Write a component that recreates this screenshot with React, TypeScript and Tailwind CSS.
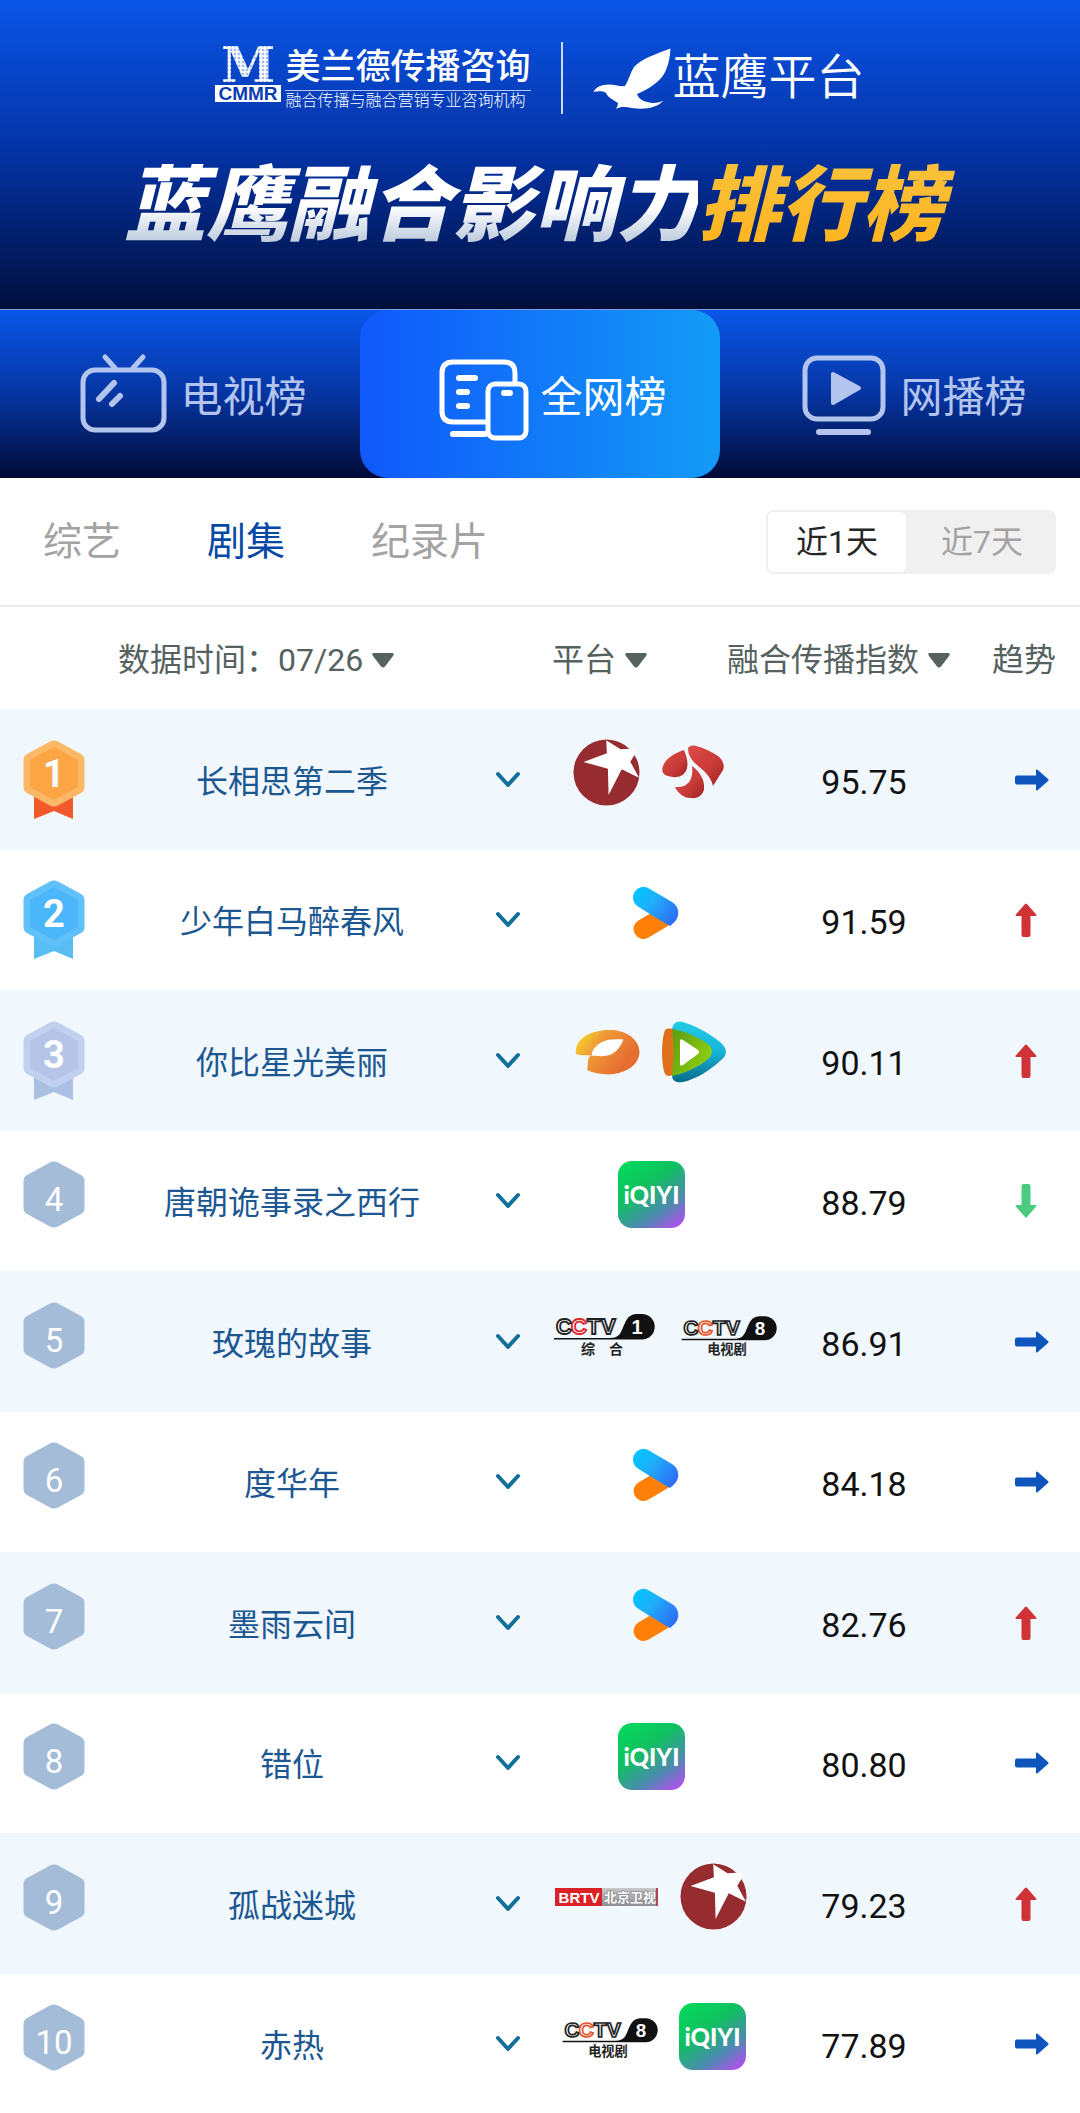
import React, { useState } from "react";

type Trend = "flat" | "up" | "down";
type Platform =
  | "dragon"
  | "jiangsu"
  | "youku"
  | "mango"
  | "tencent"
  | "iqiyi"
  | "cctv1"
  | "cctv8"
  | "brtv";

interface RankItem {
  rank: number;
  title: string;
  platforms: Platform[];
  score: string;
  trend: Trend;
}

const items: RankItem[] = [
  { rank: 1, title: "长相思第二季", platforms: ["dragon", "jiangsu"], score: "95.75", trend: "flat" },
  { rank: 2, title: "少年白马醉春风", platforms: ["youku"], score: "91.59", trend: "up" },
  { rank: 3, title: "你比星光美丽", platforms: ["mango", "tencent"], score: "90.11", trend: "up" },
  { rank: 4, title: "唐朝诡事录之西行", platforms: ["iqiyi"], score: "88.79", trend: "down" },
  { rank: 5, title: "玫瑰的故事", platforms: ["cctv1", "cctv8"], score: "86.91", trend: "flat" },
  { rank: 6, title: "度华年", platforms: ["youku"], score: "84.18", trend: "flat" },
  { rank: 7, title: "墨雨云间", platforms: ["youku"], score: "82.76", trend: "up" },
  { rank: 8, title: "错位", platforms: ["iqiyi"], score: "80.80", trend: "flat" },
  { rank: 9, title: "孤战迷城", platforms: ["brtv", "dragon"], score: "79.23", trend: "up" },
  { rank: 10, title: "赤热", platforms: ["cctv8", "iqiyi"], score: "77.89", trend: "flat" },
];

/* ---------- platform logos ---------- */

const DragonLogo = () => (
  <svg width="67" height="67" viewBox="0 0 67 67" role="img" aria-label="东方卫视">
    <circle cx="33.5" cy="33.5" r="33" fill="#962b30" />
    <path
      d="M33.2 1.3 47.6 10.3 60.5 9.5 63 13.5 57.3 22.7 66 38.7 48.7 30.3 35.6 56 34.9 29.7 10.5 23 33.9 14.3Z"
      fill="#fff"
    />
  </svg>
);

const JiangsuLogo = () => (
  <svg width="67" height="67" viewBox="0 0 67 67" role="img" aria-label="江苏卫视">
    <defs>
      <linearGradient id="petal" x1="0" y1="0" x2="1" y2="1">
        <stop offset="0" stopColor="#dd4b46" />
        <stop offset="0.6" stopColor="#c83a38" />
        <stop offset="1" stopColor="#98231f" />
      </linearGradient>
    </defs>
    <g fill="url(#petal)">
      <path d="M22 11C25 18 27 26 24 32C20 39 12 39 6 37C1 36-1 32 1 27C4 19 13 14 22 11Z" />
      <path d="M26 9C27 7 31 6 34 7C42 9 50 13 56 17C61 21 63 27 61 31L51 47C50 42 47 37 42 32C34 25 26 20 26 9Z" />
      <path d="M30 27C38 33 43 41 42 50C41 56 36 60 29 59C21 59 16 54 13 48C24 49 32 43 30 27Z" />
    </g>
  </svg>
);

const YoukuLogo = () => (
  <svg width="67" height="67" viewBox="0 0 67 67" role="img" aria-label="优酷">
    <defs>
      <linearGradient id="youkuBlue" x1="16" y1="10" x2="58" y2="42" gradientUnits="userSpaceOnUse">
        <stop offset="0" stopColor="#00c6ff" />
        <stop offset="0.4" stopColor="#1fb0fb" />
        <stop offset="1" stopColor="#2f68f5" />
      </linearGradient>
    </defs>
    <path d="M25.5 49 44 38" stroke="#ff8008" strokeWidth="20" strokeLinecap="round" />
    <path
      d="M20 8.600A10.500 10.500 0 0 1 31 8.500L54 22C62 27 62 37 56 42.500L52 46C43 41 30 33 20 26.500A10.500 10.500 0 0 1 20 8.600Z"
      fill="url(#youkuBlue)"
    />
  </svg>
);

const MangoLogo = () => (
  <svg width="67" height="67" viewBox="0 0 67 67" role="img" aria-label="湖南卫视">
    <defs>
      <linearGradient id="mango" x1="0" y1="0.3" x2="0.8" y2="0.7">
        <stop offset="0" stopColor="#f6cf2a" />
        <stop offset="0.35" stopColor="#ee9a38" />
        <stop offset="1" stopColor="#e66d30" />
      </linearGradient>
    </defs>
    <path
      d="M3 34C1 16 22 10 36 10C52 10 66 18 66.500 32C66 47 50 54 35 54.500C27 54 20 53 14 50C16 45 13 39 18 35.500C13 35 8 36 3 34Z"
      fill="url(#mango)"
    />
    <path d="M18.500 35.500C24 36 32 37 38 34.500C45 31 48 25 50.500 19.500C42 19 35 19 29 22C23 25 19 30 18.500 35.500Z" fill="#fff" />
  </svg>
);

const TencentLogo = () => (
  <svg width="67" height="67" viewBox="0 0 67 67" role="img" aria-label="腾讯视频">
    <defs>
      <linearGradient id="txTeal" x1="0" y1="0" x2="0" y2="1">
        <stop offset="0" stopColor="#22cbe6" />
        <stop offset="0.5" stopColor="#17b5d8" />
        <stop offset="1" stopColor="#086a88" />
      </linearGradient>
      <linearGradient id="txGreen" x1="0" y1="0" x2="1" y2="0.6">
        <stop offset="0" stopColor="#5a9c10" />
        <stop offset="1" stopColor="#8fcf12" />
      </linearGradient>
    </defs>
    <path d="M10 9C11 3 15 0 21 2C34 6 47 13 58 22C66 29 66 35 58 41C47 51 34 59 21 62C14 63 10 61 10 55Z" fill="url(#txTeal)" />
    <path d="M3 10C5 8 9 8 14 10L14 54C9 56 5 57 3 54C-1 44-1 21 3 10Z" fill="#e0701c" />
    <path d="M10 9C23 11 36 17 46 24C51 28 51 34 47 38C37 47 24 53 10 56C12 40 12 24 10 9Z" fill="url(#txGreen)" />
    <path d="M18 21Q18 18 21 20L36 30Q38 32 36 34L21 45Q18 47 18 44Z" fill="#fff" />
  </svg>
);

const IqiyiLogo = () => (
  <svg width="67" height="67" viewBox="0 0 67 67" role="img" aria-label="爱奇艺">
    <defs>
      <linearGradient id="iqiyi" x1="0.2" y1="0" x2="0.9" y2="1">
        <stop offset="0" stopColor="#06d65c" />
        <stop offset="0.35" stopColor="#10c060" />
        <stop offset="0.7" stopColor="#4a8cae" />
        <stop offset="1" stopColor="#b84df2" />
      </linearGradient>
    </defs>
    <rect width="67" height="67" rx="14" fill="url(#iqiyi)" />
    <text x="33.5" y="43" textAnchor="middle" fontFamily="Lato, sans-serif" fontWeight="900" fontSize="24" fill="#fff">
      iQIYI
    </text>
  </svg>
);

interface CctvLogoProps {
  channel: string;
  label: string;
  accent: string;
  viewBox: string;
}

const CctvLogo: React.FC<CctvLogoProps> = ({ channel, label, accent, viewBox }) => (
  <svg width="100" height="42" viewBox={viewBox} className="overflow-visible" role="img" aria-label={`CCTV${channel}`}>
    <g fontFamily="'Liberation Sans', sans-serif" fontWeight="700" fontSize="22" fill="#fff" strokeWidth="1.8">
      <text x="2" y="20" stroke="#222">C</text>
      <text x="17" y="20" stroke={accent}>C</text>
      <text x="33" y="20" stroke="#222">T</text>
      <text x="47" y="20" stroke="#222">V</text>
    </g>
    <path d="M0 24H56C66 24 67 18 70 11Q74 0 82 0H88A12.500 12.500 0 0 1 88 25.500H0Z" fill="#111" />
    <text x="83" y="20" textAnchor="middle" fontFamily="'Liberation Sans', sans-serif" fontWeight="700" fontSize="20" fill="#fff">
      {channel}
    </text>
    <text
      x="48"
      y="40"
      textAnchor="middle"
      fontFamily="'Noto Sans CJK SC', sans-serif"
      fontWeight="700"
      fontSize="14"
      fill="#222"
    >
      {label}
    </text>
  </svg>
);

const BrtvLogo = () => (
  <svg width="103" height="18" viewBox="0 0 103 18" className="overflow-visible" role="img" aria-label="北京卫视">
    <defs>
      <linearGradient id="brtv" x1="0" y1="0" x2="0" y2="1">
        <stop offset="0" stopColor="#c9c9cc" />
        <stop offset="1" stopColor="#8f9095" />
      </linearGradient>
    </defs>
    <rect width="47" height="18" fill="#dc2027" />
    <rect x="47" width="56" height="18" fill="url(#brtv)" />
    <rect x="101" width="2" height="18" fill="#b0405a" />
    <text x="24" y="15" textAnchor="middle" fontFamily="'Liberation Sans', sans-serif" fontWeight="700" fontSize="15" fill="#fff">
      BRTV
    </text>
    <text
      x="75"
      y="14"
      textAnchor="middle"
      fontFamily="'Noto Sans CJK SC', sans-serif"
      fontWeight="700"
      fontSize="13"
      fill="#fff"
      stroke="#8a8b90"
      strokeWidth="1.5"
      paintOrder="stroke"
    >
      北京卫视
    </text>
  </svg>
);

const platformLogos: Record<Platform, React.ReactNode> = {
  dragon: <DragonLogo />,
  jiangsu: <JiangsuLogo />,
  youku: <YoukuLogo />,
  mango: <MangoLogo />,
  tencent: <TencentLogo />,
  iqiyi: <IqiyiLogo />,
  cctv1: <CctvLogo channel="1" label="综　合" accent="#e0252b" viewBox="0 0 100 42" />,
  cctv8: <CctvLogo channel="8" label="电视剧" accent="#e2582c" viewBox="-6 -2 106 44" />,
  brtv: <BrtvLogo />,
};

/* ---------- small pieces ---------- */

const medalColors: Record<number, { hex: string; inner: string; ribbon: string }> = {
  1: { hex: "#fbb867", inner: "#fba545", ribbon: "#f2592a" },
  2: { hex: "#5fc0fa", inner: "#4cb6fa", ribbon: "#57bdf3" },
  3: { hex: "#c2d0f0", inner: "#b6c4e8", ribbon: "#a9c0e2" },
};

const RankBadge: React.FC<{ rank: number }> = ({ rank }) => {
  const medal = medalColors[rank];
  return (
    <svg width="62" height="80" viewBox="0 0 62 80" className="block">
      {medal && <path d="M11 52H50V79L31 71 11 79Z" fill={medal.ribbon} />}
      <path
        d="M27 1.500Q31-0.500 35 1.500L58 14Q61.500 16 61.500 20V47Q61.500 51 58 53L35 65.500Q31 67.500 27 65.500L4 53Q0.500 51 0.500 47V20Q0.500 16 4 14Z"
        fill={medal ? medal.hex : "#a5bcd9"}
      />
      {medal && <path d="M31 7 55 20V47L31 60 7 47V20Z" fill={medal.inner} />}
      <text
        x="31"
        y={medal ? 47 : 50}
        textAnchor="middle"
        fontFamily="Roboto, sans-serif"
        fontWeight={medal ? 700 : 400}
        fontSize={medal ? 38 : 33}
        fill="#fff"
      >
        {rank}
      </text>
    </svg>
  );
};

const TrendArrow: React.FC<{ trend: Trend }> = ({ trend }) => {
  if (trend === "flat") {
    return (
      <svg width="34" height="22" viewBox="0 0 34 22" className="block" role="img" aria-label="持平">
        <path
          d="M2 6.500H21V1.500Q21 0 22.500 0.800L33 10Q34 11 33 12L22.500 21.200Q21 22 21 20.500V15.500H2Q0 15.500 0 13.500V8.500Q0 6.500 2 6.500Z"
          fill="#0d55bd"
        />
      </svg>
    );
  }
  return (
    <svg
      width="22"
      height="34"
      viewBox="0 0 22 34"
      className={trend === "down" ? "block rotate-180" : "block"}
      role="img"
      aria-label={trend === "up" ? "上升" : "下降"}
    >
      <path
        d="M6.500 32V13H1.500Q0 13 0.800 11.500L10 1Q11 0 12 1L21.200 11.500Q22 13 20.500 13H15.500V32Q15.500 34 13.500 34H8.500Q6.500 34 6.500 32Z"
        fill={trend === "up" ? "#cf3237" : "#4bcb80"}
      />
    </svg>
  );
};

const HeaderSelect: React.FC<{ id: string; label: string; value: string }> = ({ id, label, value }) => (
  <span className="flex items-center gap-2">
    <select
      id={id}
      aria-label={label}
      defaultValue={value}
      className="appearance-none bg-transparent p-0 text-[32px] leading-[48px] outline-none"
    >
      <option>{value}</option>
    </select>
    <svg width="22" height="15" viewBox="0 0 22 15" aria-hidden="true">
      <path d="M2 0H20Q23 0 21 3L13 13.500Q11 15.500 9 13.500L1 3Q-1 0 2 0Z" fill="#56625f" />
    </svg>
  </span>
);

/* ---------- tab icons ---------- */

const TvIcon = () => (
  <svg width="90" height="96" viewBox="0 0 90 96" fill="none" stroke="currentColor" strokeWidth="5" strokeLinecap="round">
    <rect x="4" y="24" width="81" height="60" rx="12" />
    <path d="M26 11 36 22M64 11 54 22" />
    <path d="M20 53 35 37M33 58 41 50" strokeWidth="6" />
  </svg>
);

const AllNetIcon = () => (
  <svg width="90" height="96" viewBox="0 0 90 96" fill="none" stroke="currentColor" strokeWidth="5" strokeLinecap="round">
    <path d="M46 76H14Q3 76 3 65V27Q3 16 14 16H65Q76 16 76 27V36" />
    <rect x="49" y="38" width="38" height="54" rx="7" />
    <path d="M20 32H36M20 46H28M20 60H28M65 47H71M14 88H46" strokeWidth="6" />
  </svg>
);

const PlayIcon = () => (
  <svg width="90" height="96" viewBox="0 0 90 96" fill="none" stroke="currentColor" strokeWidth="5" strokeLinecap="round">
    <rect x="6" y="12" width="78" height="61" rx="12" />
    <path d="M20 86H69" strokeWidth="6" />
    <path d="M34 28 60 42 34 57Z" fill="currentColor" strokeWidth="4" strokeLinejoin="round" />
  </svg>
);

const channels = [
  { name: "电视榜", icon: <TvIcon /> },
  { name: "全网榜", icon: <AllNetIcon /> },
  { name: "网播榜", icon: <PlayIcon /> },
];
const categories = ["综艺", "剧集", "纪录片"];
const ranges = ["近1天", "近7天"];

const Banner = () => (
  <header className="flex h-[309px] flex-col items-center bg-linear-to-b/srgb from-[#0a55e8] via-[#0432a4] to-[#010e3a] pt-[42px] text-white">
    <div className="flex items-center">
      <div className="flex gap-1">
        <svg width="66" height="56" viewBox="0 0 66 56" className="overflow-visible" role="img" aria-label="CMMR">
          <defs>
            <pattern id="dots" width="4" height="4" patternUnits="userSpaceOnUse">
              <rect width="4" height="4" fill="#fff" fillOpacity="0.45" />
              <circle cx="2" cy="2" r="2" fill="#fff" />
            </pattern>
          </defs>
          <text x="33" y="36" textAnchor="middle" fontFamily="'DejaVu Serif', serif" fontWeight="700" fontSize="49" fill="url(#dots)">
            M
          </text>
          <rect y="39" width="66" height="17" fill="#fff" />
          <text x="33" y="54" textAnchor="middle" fontFamily="'Liberation Sans', sans-serif" fontWeight="700" fontSize="19" fill="#0a3cb4">
            CMMR
          </text>
        </svg>
        <div className="flex flex-col pt-1">
          <p className="border-b border-white/70 pb-1 text-[35px] leading-9 font-medium">美兰德传播咨询</p>
          <p className="text-[16px] leading-5 font-light">融合传播与融合营销专业咨询机构</p>
        </div>
      </div>
      <div className="mx-[30px] h-[72px] w-[2px] bg-white/80" />
      <div className="flex items-center gap-[2px]">
        <svg width="78" height="61" viewBox="592 42 78 61" fill="#fff" aria-hidden="true">
          <path d="M669.500 42.500C655 48 640 53 633 61C629 67 628 74 624 80C618 81 610 77 603 79C597 80 594 83 592.500 86C597 85 603 85 605 87C607 92 613 94 617 97C617 99 616 101 615 103C620 100 625 101 631 102C643 104 656 102 662 95C654 98 648 97 643 95C638 93 637 90 636 88C650 82 661 74 665 64C668 57 669 50 669.500 42.500Z" />
        </svg>
        <p className="text-[48px] leading-[60px] font-[350]">蓝鹰平台</p>
      </div>
    </div>
    <h1 className="mt-10 text-[82px] leading-[104px] font-black italic">
      <span className="bg-linear-to-b/srgb from-white from-50% to-[#b9c8dc] to-90% bg-clip-text text-transparent">蓝鹰融合影响力</span>
      <span className="bg-linear-to-b/srgb from-[#f8c23c] to-[#ffb31c] bg-clip-text pr-3 text-transparent">排行榜</span>
    </h1>
  </header>
);

const App: React.FC = () => {
  const [channel, setChannel] = useState("全网榜");
  const [category, setCategory] = useState("剧集");
  const [range, setRange] = useState("近1天");

  return (
    <main className="w-full overflow-x-hidden bg-white font-['Roboto','Noto_Sans_CJK_SC',sans-serif]" lang="zh-CN">
      <Banner />

      <nav className="grid h-[169px] grid-cols-3 border-t border-[#7f9fe0] bg-linear-to-b/srgb from-[#0a56e8] via-[#0635a2] to-[#010a36]">
        {channels.map(({ name, icon }) => (
          <button
            key={name}
            type="button"
            aria-pressed={channel === name}
            onClick={() => setChannel(name)}
            className={`flex items-center justify-center gap-[11px] pl-[26px] text-[42px] leading-[60px] ${
              channel === name
                ? "rounded-[28px] bg-linear-to-r/srgb from-[#1058fb] to-[#139bf6] text-white"
                : "text-[#b3c5ee]"
            }`}
          >
            {icon}
            <span className="pt-2">{name}</span>
          </button>
        ))}
      </nav>

      <div className="flex h-[129px] items-center justify-between border-b-2 border-[#e9e9e9] pr-6 pl-[43px]">
        <div className="flex gap-[86px]">
          {categories.map((name) => (
            <button
              key={name}
              type="button"
              aria-pressed={category === name}
              onClick={() => setCategory(name)}
              className={`text-[39px] leading-[56px] ${category === name ? "text-[#0648a6]" : "text-[#a3a3a3]"}`}
            >
              {name}
            </button>
          ))}
        </div>
        <div className="flex h-16 w-[290px] rounded-lg bg-[#f0f0f0]">
          {ranges.map((name) => (
            <button
              key={name}
              type="button"
              aria-pressed={range === name}
              onClick={() => setRange(name)}
              className={`rounded-lg text-[32px] leading-[48px] ${
                range === name
                  ? "w-[142px] border-2 border-[#f0f0f0] bg-white text-[#262626]"
                  : "flex-1 text-[#a3a3a3]"
              }`}
            >
              {name}
            </button>
          ))}
        </div>
      </div>

      <table className="w-full table-fixed">
        <colgroup>
          <col className="w-[108px]" />
          <col />
          <col className="w-16" />
          <col className="w-[222px]" />
          <col className="w-[204px]" />
          <col className="w-[114px]" />
        </colgroup>
        <thead>
          <tr className="h-[102px] text-[32px] leading-[48px] text-[#56625f]">
            <th colSpan={3} className="p-0 pt-1 pr-7 font-normal">
              <div className="flex items-center justify-center">
                <label htmlFor="date">数据时间：</label>
                <HeaderSelect id="date" label="数据时间" value="07/26" />
              </div>
            </th>
            <th className="p-0 pt-1 pl-3 font-normal">
              <HeaderSelect id="platform" label="平台" value="平台" />
            </th>
            <th className="p-0 pt-1 pr-4 font-normal">
              <div className="flex justify-end">
                <HeaderSelect id="index" label="融合传播指数" value="融合传播指数" />
              </div>
            </th>
            <th className="p-0 pt-1 pr-6 text-right font-normal">趋势</th>
          </tr>
        </thead>
        <tbody>
          {items.map((item) => (
            <tr key={item.rank} className="h-[140px] odd:h-[141px] odd:bg-[#f0f8fe] last:h-[139px]">
              <td className="p-0 pl-[23px]">
                <RankBadge rank={item.rank} />
              </td>
              <td className="p-0 pt-1 text-center text-[32px] leading-[48px] text-[#1c5792]">{item.title}</td>
              <td className="p-0">
                <button type="button" aria-label={`展开${item.title}`} className="flex w-full items-center justify-center">
                  <svg width="26" height="18" viewBox="0 0 26 18" fill="none" stroke="#11709a" strokeWidth="4" strokeLinecap="round" strokeLinejoin="round">
                    <path d="M3 3 13 14 23 3" />
                  </svg>
                </button>
              </td>
              <td className="p-0 px-[14px] pb-[14px]">
                <div className="flex items-center gap-[22px] [justify-content:safe_center] [&>svg]:shrink-0">
                  {item.platforms.map((platform) => (
                    <React.Fragment key={platform}>{platformLogos[platform]}</React.Fragment>
                  ))}
                </div>
              </td>
              <td className="p-0 pt-1 text-center text-[34px] leading-[48px] text-[#111]">{item.score}</td>
              <td className="p-0 pl-[49px]">
                <TrendArrow trend={item.trend} />
              </td>
            </tr>
          ))}
        </tbody>
      </table>
    </main>
  );
};

export default App;
